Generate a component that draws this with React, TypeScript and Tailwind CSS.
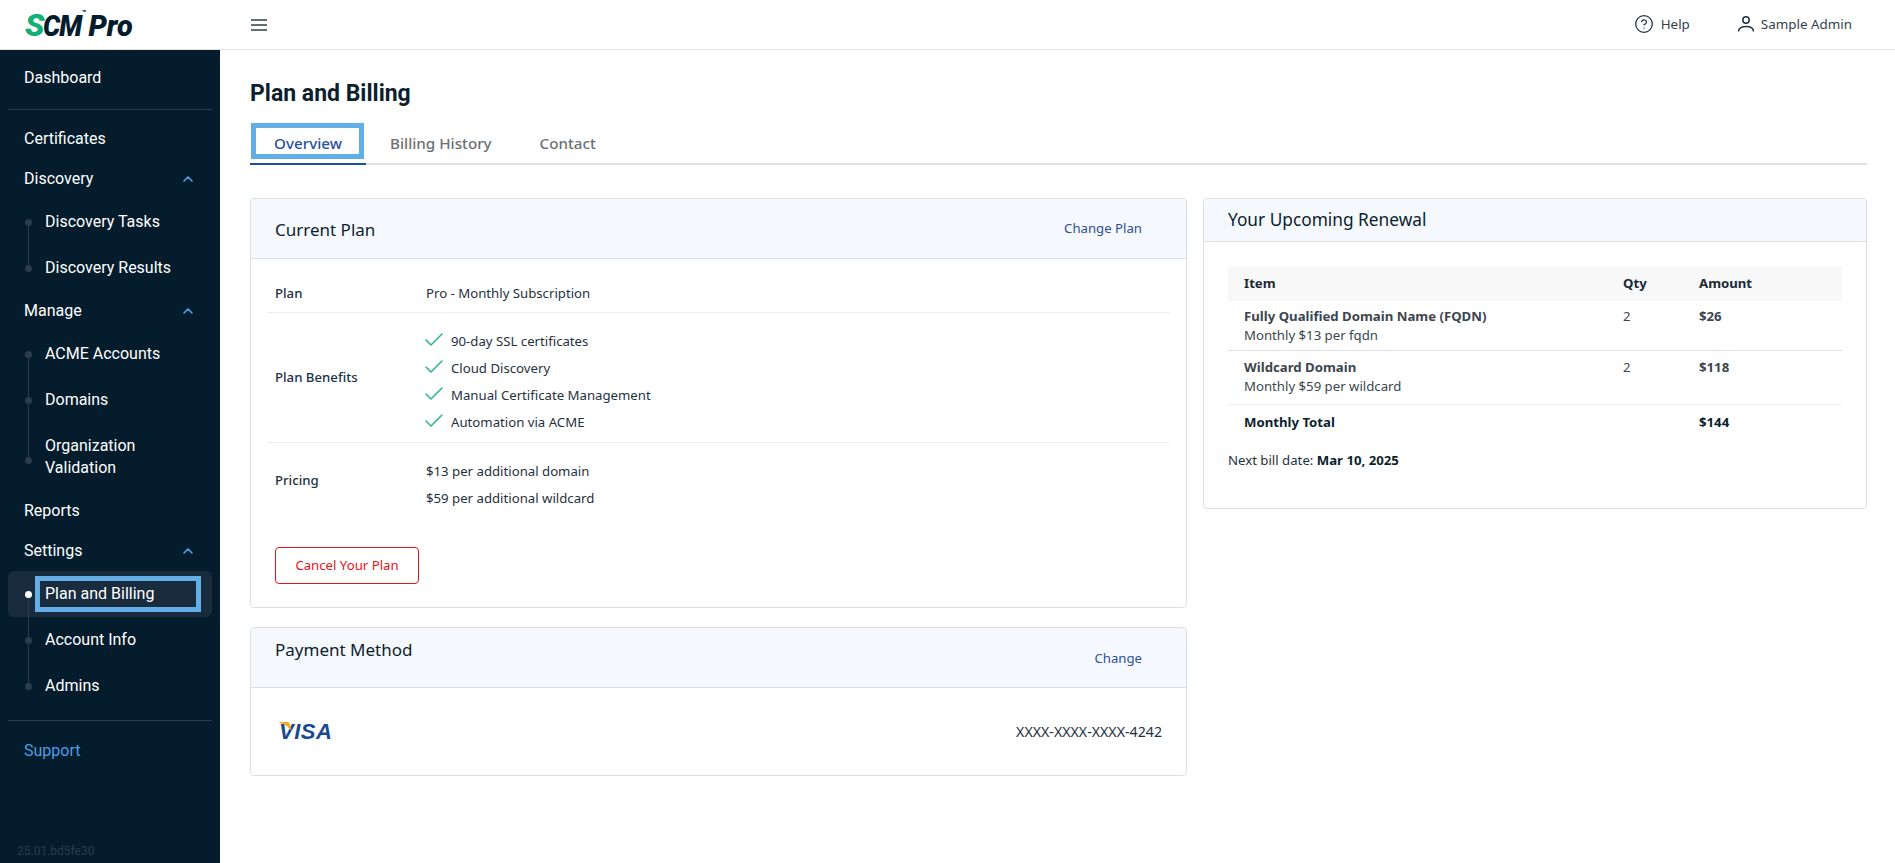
import React from 'react';
import { CircleHelp, ChevronUp, Check } from 'lucide-react';

const tree = 'relative flex items-center h-[46px] pl-[45px] text-[16px] text-white';

function NavItem({ label, last, first }: { label: string; last?: boolean; first?: boolean }) {
  return (
    <div className={tree}>
      {!first && <span className="absolute left-[28px] top-0 h-1/2 w-px bg-[#2b3c4e]" />}
      {!last && <span className="absolute left-[28px] top-1/2 h-1/2 w-px bg-[#2b3c4e]" />}
      <span className="absolute left-[25px] top-1/2 -mt-[3px] w-[7px] h-[7px] rounded-full bg-[#2b3c4e]" />
      {label}
    </div>
  );
}

function Group({ label }: { label: string }) {
  return (
    <div className="flex items-center justify-between h-10 pl-6 pr-[24px] text-[16px] text-white">
      {label}
      <ChevronUp className="w-4 h-4 text-[#4c9fe6]" strokeWidth={2.5} />
    </div>
  );
}

function Sidebar() {
  return (
    <aside className="w-[220px] shrink-0 bg-[#041c2c] relative font-['Roboto',sans-serif] h-[814px]">
      <div className="flex items-center h-10 mt-[8px] pl-6 text-[16px] text-white">Dashboard</div>
      <div className="mx-2 mt-[11px] h-px bg-[#2b3c4e]" />
      <div className="flex items-center h-10 mt-[9px] pl-6 text-[16px] text-white">Certificates</div>
      <Group label="Discovery" />
      <NavItem label="Discovery Tasks" first />
      <NavItem label="Discovery Results" last />
      <Group label="Manage" />
      <NavItem label="ACME Accounts" first />
      <NavItem label="Domains" />
      <div className="relative flex items-center h-[68px] pl-[45px] text-[16px] leading-[22px] text-white">
        <span className="absolute left-[28px] top-0 h-[37px] w-px bg-[#2b3c4e]" />
        <span className="absolute left-[25px] top-[34px] w-[7px] h-[7px] rounded-full bg-[#2b3c4e]" />
        <span>
          Organization
          <br />
          Validation
        </span>
      </div>
      <div className="flex items-center h-10 pl-6 text-[16px] text-white">Reports</div>
      <Group label="Settings" />
      <div className="relative mx-2 h-[46px] rounded-md bg-[#182c3e] flex items-center pl-[37px] text-[16px] text-white">
        <span className="absolute left-[20px] top-[23px] h-[23px] w-px bg-[#2b3c4e]" />
        <span className="absolute left-[17px] top-[20px] w-[7px] h-[7px] rounded-full bg-white" />
        <span className="absolute left-[27px] top-[5px] w-[166px] h-[36px] border-[5px] border-[#63aee6]" />
        <span className="relative">Plan and Billing</span>
      </div>
      <NavItem label="Account Info" />
      <NavItem label="Admins" last />
      <div className="mx-2 mt-[11px] h-px bg-[#2b3c4e]" />
      <div className="flex items-center h-10 mt-[10px] pl-6 text-[16px] text-[#4c9fe6]">Support</div>
      <div className="absolute left-[17px] bottom-[4px] text-[12px] text-[#2b3c4e]">25.01.bd5fe30</div>
    </aside>
  );
}

function Header() {
  return (
    <header className="h-[50px] flex items-center border-b border-[#e2e2e2] bg-white font-['Noto_Sans',sans-serif]">
      <div className="w-[220px] pl-[25px] flex items-baseline font-['Roboto',sans-serif] italic font-black text-[30px] leading-none tracking-[-1px] text-[#041c2c]">
        <span className="text-[#12b076] text-[32px]">S</span>
        <span className="scale-x-90 origin-left w-[38px]">CM</span>
        <span className="text-[7px] self-start mt-[1px] w-[7px] tracking-normal">™</span>
        <span className="text-[29px] tracking-normal">Pro</span>
      </div>
      <svg className="ml-[31px] w-4 h-3 text-[#2a4048]" viewBox="0 0 16 12" fill="none" stroke="currentColor" strokeWidth="1.6">
        <path d="M0 1h16M0 6h16M0 11h16" />
      </svg>
      <div className="ml-auto flex items-center text-[13.4px] text-[#32414e] pr-[43px]">
        <CircleHelp className="w-5 h-5 text-[#1f3140]" strokeWidth={1.5} />
        <span className="ml-[7px]">Help</span>
        <svg className="ml-[47px] w-[18px] h-[18px] text-[#1f3140]" viewBox="0 0 18 18" fill="none" stroke="currentColor" strokeWidth="1.5">
          <circle cx="9" cy="5" r="3.2" />
          <path d="M1.5 16.5c0-3.2 3-5 7.5-5s7.5 1.8 7.5 5" />
        </svg>
        <span className="ml-[6px]">Sample Admin</span>
      </div>
    </header>
  );
}

function Tabs() {
  return (
    <div className="flex mt-[13px] h-[42px] border-b-2 border-[#e0e0e0] text-[15.2px] font-medium">
      <div className="relative w-[116px] h-[42px] border-b-2 border-[#1c4fa0] flex items-center justify-center text-[#27509f]">
        <span className="absolute left-px top-0 w-[113px] h-[36px] border-[5px] border-[#63aee6]" />
        <span className="relative">Overview</span>
      </div>
      <div className="px-6 flex items-center text-[#6b6f73]">Billing History</div>
      <div className="px-6 flex items-center text-[#6b6f73]">Contact</div>
    </div>
  );
}

function Card({ className, children }: { className: string; children: React.ReactNode }) {
  return <section className={`border border-[#dcdfe3] rounded-[4px] bg-white ${className}`}>{children}</section>;
}

function CurrentPlan() {
  const benefits = ['90-day SSL certificates', 'Cloud Discovery', 'Manual Certificate Management', 'Automation via ACME'];
  return (
    <Card className="h-[410px]">
      <div className="h-[60px] bg-[#f5f8fd] border-b border-[#dcdfe3] rounded-t-[4px] flex items-center justify-between pl-6 pr-[44px]">
        <h2 className="text-[17px] text-[#0c1f2e] mt-[2px]">Current Plan</h2>
        <a className="text-[13.2px] text-[#2d5096]">Change Plan</a>
      </div>
      <div className="mx-4 text-[13.2px] text-[#1f3140]">
        <div className="flex items-center h-[54px] pt-[17px] border-b border-[#eeeeee]">
          <div className="w-[159px] pl-2 font-medium">Plan</div>
          <div>Pro - Monthly Subscription</div>
        </div>
        <div className="flex items-center h-[130px] border-b border-[#eeeeee]">
          <div className="w-[159px] pl-2 font-medium mt-[1px]">Plan Benefits</div>
          <ul className="flex flex-col mt-[9px]">
            {benefits.map((b) => (
              <li key={b} className="flex items-center h-[27px]">
                <Check className="w-6 h-6 text-[#2bb58a] -ml-1 mr-[5px] -mt-[4px]" strokeWidth={1.5} />
                {b}
              </li>
            ))}
          </ul>
        </div>
        <div className="flex items-center h-[76px]">
          <div className="w-[159px] pl-2 font-medium">Pricing</div>
          <div className="flex flex-col mt-[9px]">
            <div className="h-[27px] flex items-center">$13 per additional domain</div>
            <div className="h-[27px] flex items-center">$59 per additional wildcard</div>
          </div>
        </div>
      </div>
      <button className="ml-6 mt-[28px] w-[144px] h-[37px] border border-[#e3141c] rounded-[4px] text-[13.2px] text-[#e3141c] flex items-center justify-center">
        Cancel Your Plan
      </button>
    </Card>
  );
}

function PaymentMethod() {
  return (
    <Card className="h-[149px] mt-[19px]">
      <div className="h-[60px] bg-[#f5f8fd] border-b border-[#dcdfe3] rounded-t-[4px] flex justify-between pl-6 pr-[44px]">
        <h2 className="text-[17px] text-[#0c1f2e] mt-[9px]">Payment Method</h2>
        <a className="text-[13.2px] text-[#2d5096] mt-[21px]">Change</a>
      </div>
      <div className="flex items-center justify-between h-[88px] pl-[28px] pr-[24px]">
        <div className="relative font-['Liberation_Sans',sans-serif] italic font-bold text-[22px] leading-none text-[#1a4a8e] tracking-[0.5px]">
          VISA
          <svg className="absolute left-0 top-[1px] w-[13px] h-[10px]" viewBox="0 0 13 10">
            <path d="M0 0h8c1.5 0 2.3.6 2.6 2L13 10C10 5 5 1.5 0 .6z" fill="#f4a81d" />
          </svg>
        </div>
        <div className="text-[14.2px] text-[#1f3140]">XXXX-XXXX-XXXX-4242</div>
      </div>
    </Card>
  );
}

function Renewal() {
  return (
    <Card className="h-[311px]">
      <div className="h-[43px] bg-[#f5f8fd] border-b border-[#dcdfe3] rounded-t-[4px] flex items-center pl-6">
        <h2 className="text-[17.3px] text-[#0c1f2e]">Your Upcoming Renewal</h2>
      </div>
      <div className="px-6 pt-6 text-[13.2px]">
        <div className="grid grid-cols-[379px_76px_1fr] pl-4 items-center h-[35px] bg-[#f8f8f8] font-bold text-[#1a2a38]">
          <div>Item</div>
          <div>Qty</div>
          <div>Amount</div>
        </div>
        <div className="grid grid-cols-[379px_76px_1fr] pl-4 h-[50px] pt-[6px] leading-[19px] border-b border-[#e0e0e0] text-[#3b4650]">
          <div>
            <div className="font-bold">Fully Qualified Domain Name (FQDN)</div>
            <div>Monthly $13 per fqdn</div>
          </div>
          <div>2</div>
          <div className="font-bold">$26</div>
        </div>
        <div className="grid grid-cols-[379px_76px_1fr] pl-4 h-[54px] pt-[7px] leading-[19px] border-b border-[#eeeeee] text-[#3b4650]">
          <div>
            <div className="font-bold">Wildcard Domain</div>
            <div>Monthly $59 per wildcard</div>
          </div>
          <div>2</div>
          <div className="font-bold">$118</div>
        </div>
        <div className="grid grid-cols-[379px_76px_1fr] pl-4 items-center h-[35px] font-bold text-[#0c1f2e]">
          <div>Monthly Total</div>
          <div />
          <div>$144</div>
        </div>
        <div className="mt-[11px] text-[#1f3140]">
          Next bill date: <span className="font-bold text-[#0c1f2e]">Mar 10, 2025</span>
        </div>
      </div>
    </Card>
  );
}

export default function App() {
  return (
    <div className="w-[1895px] h-[863px] overflow-hidden bg-white font-['Noto_Sans',sans-serif]">
      <Header />
      <div className="flex">
        <Sidebar />
        <main className="flex-1 pl-[30px] pr-[28px]">
          <h1 className="mt-[28px] font-['Roboto',sans-serif] font-bold text-[23px] leading-[32px] text-[#0c1f2e]">
            Plan and Billing
          </h1>
          <Tabs />
          <div className="flex gap-[16px] mt-[33px]">
            <div className="w-[937px]">
              <CurrentPlan />
              <PaymentMethod />
            </div>
            <div className="w-[664px]">
              <Renewal />
            </div>
          </div>
        </main>
      </div>
    </div>
  );
}
